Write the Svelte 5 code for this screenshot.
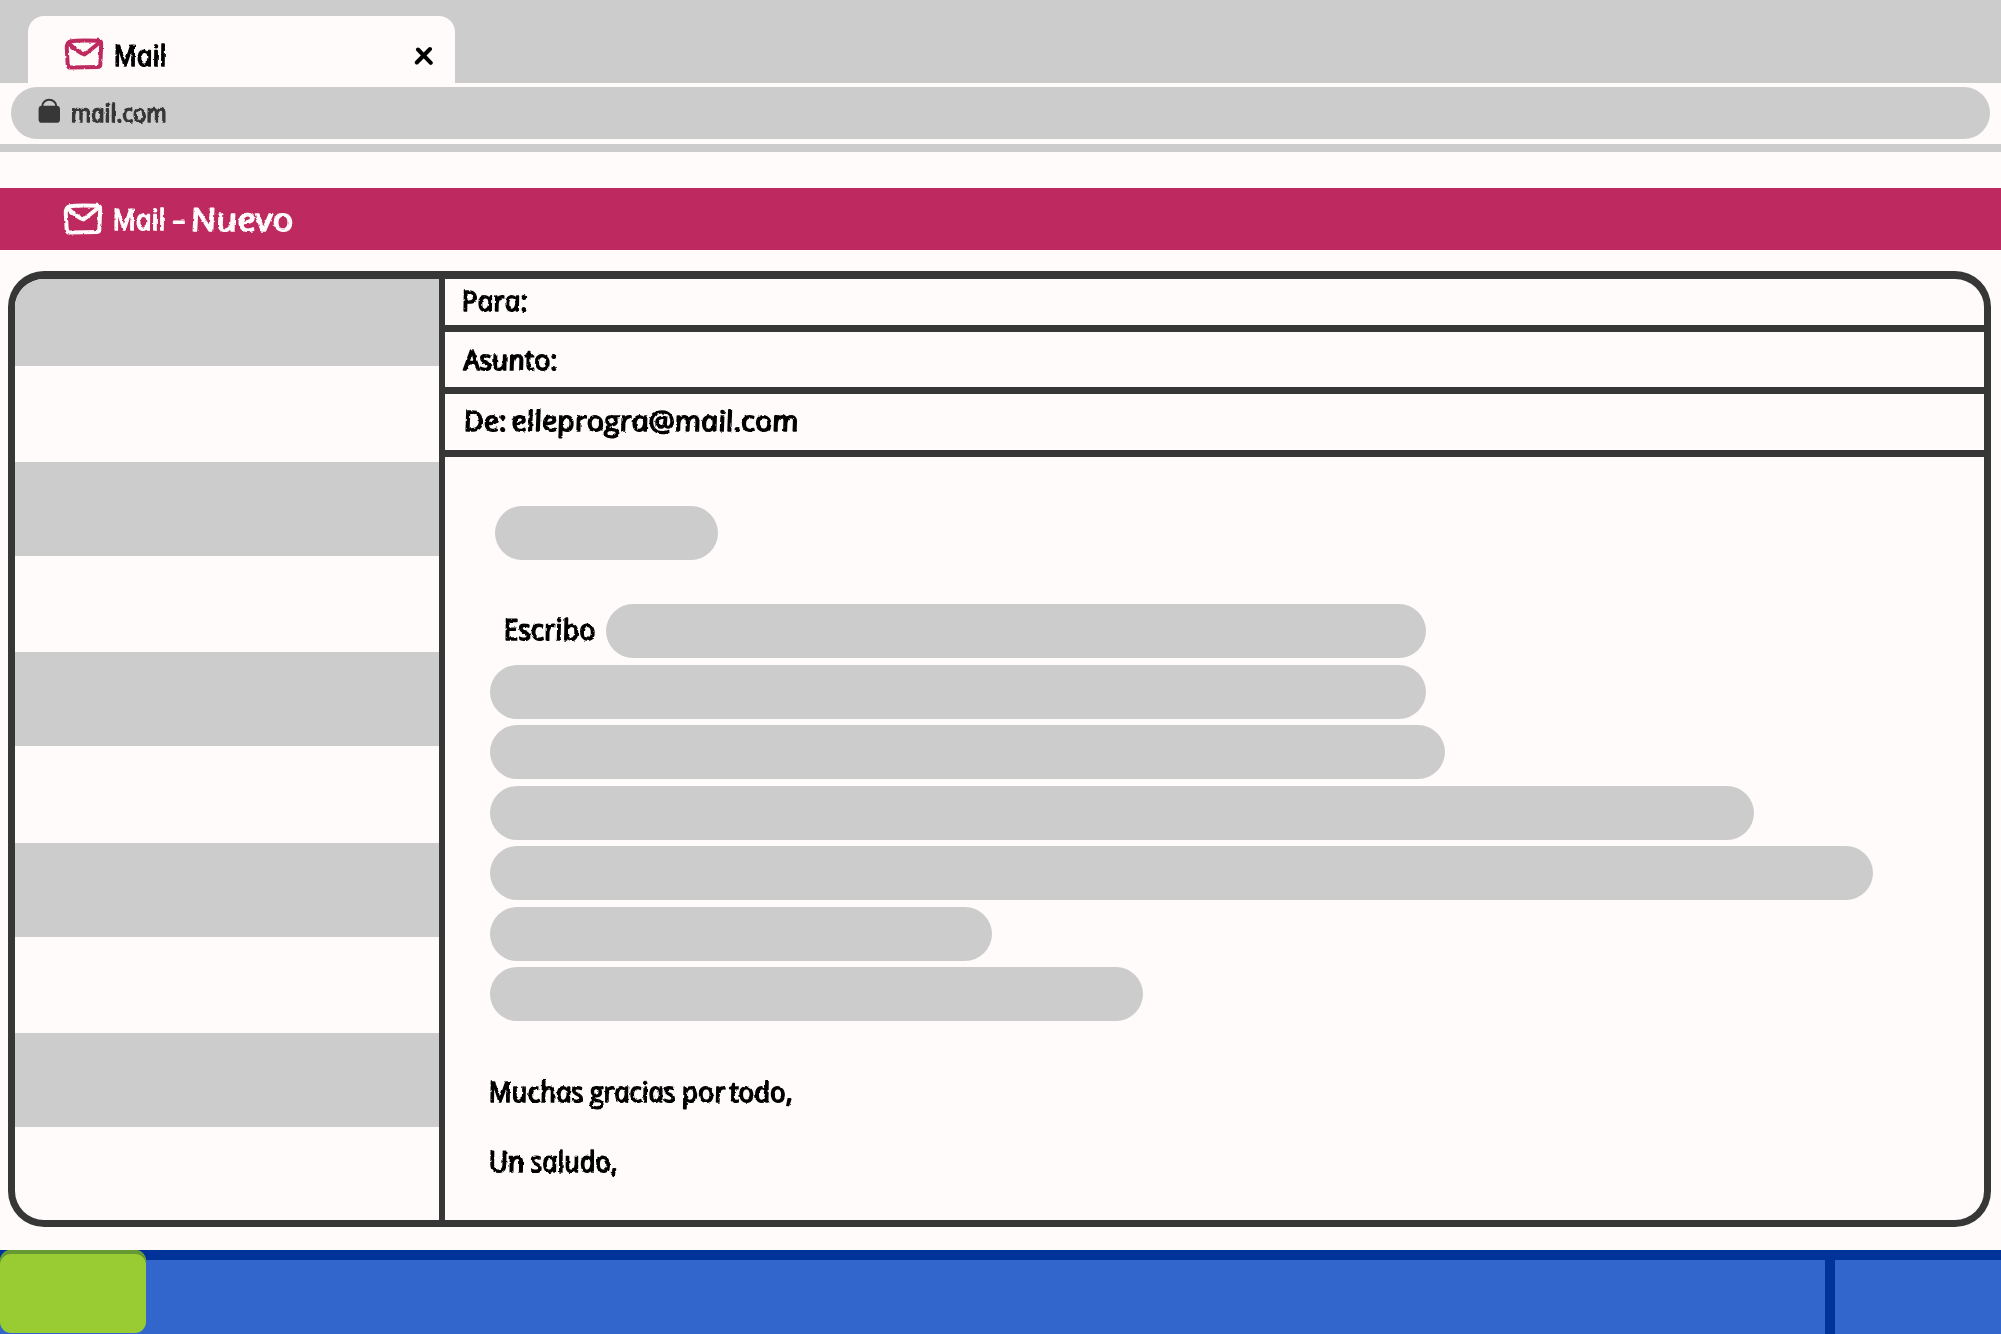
<script>
  // Each word is [text, x offset, width]; size is the font size of the line.
  const labels = {
    tab: { size: 29, words: [['Mail', 0, 53]] },
    url: { size: 25, words: [['mail.com', 0, 96]] },
    title: { size: 29, words: [['Mail', 0, 53], ['-', 60, 13]] },
    titleNew: { size: 32, words: [['Nuevo', 0, 103]] },
    to: { size: 28, words: [['Para:', 0, 66]] },
    subject: { size: 28, words: [['Asunto:', 0, 94]] },
    from: { size: 28, words: [['De:', 0, 43], ['elleprogra@mail.com', 48, 287]] },
    write: { size: 29, words: [['Escribo', 0, 92]] },
    thanks: {
      size: 28,
      words: [['Muchas', 0, 95], ['gracias', 101, 86], ['por', 193, 44], ['todo,', 241, 63]]
    },
    regards: { size: 29, words: [['Un', 0, 36], ['saludo,', 42, 87]] }
  };

  const lines = [936, 955, 1264, 1383, 502, 653];
  const stripes = [0, 1, 2, 3, 4];
</script>

{#snippet hand(label)}
  <svg class="hand" height="40" width={label.words.at(-1)[1] + label.words.at(-1)[2]}>
    <text transform="translate(0 30) skewX(11)" font-size={label.size}>
      {#each label.words as [word, x, w]}<tspan {x} y="0" textLength={w} lengthAdjust="spacingAndGlyphs">{word}</tspan>{' '}{/each}
    </text>
  </svg>
{/snippet}

{#snippet envelope()}
  <svg class="envelope" width="40" height="32" viewBox="0 0 40 32">
    <path d="M7 3.2C14 2 27 2.4 35 2.8Q37.3 3 37.2 6L36.3 27Q36.1 29 33.5 29L7 29.6Q4 29.8 3.7 26.5L2.8 11Q2.5 4 7 3.2Z" />
    <path d="M5 5.5Q13 13.5 20.5 16.5Q26 12.5 35.5 4.5" />
  </svg>
{/snippet}

<svg class="defs" width="0" height="0" aria-hidden="true">
  <filter id="rough" x="-5%" y="-10%" width="110%" height="120%">
    <feTurbulence type="fractalNoise" baseFrequency="0.22" numOctaves="2" seed="4" />
    <feDisplacementMap in="SourceGraphic" scale="2.6" xChannelSelector="R" yChannelSelector="G" />
  </filter>
</svg>

<div class="screen">
  <header class="tabs">
    <div class="tab">
      {@render envelope()}
      {@render hand(labels.tab)}
      <svg class="close" width="20" height="20" viewBox="0 0 20 20">
        <path d="M4 3.5L16.8 16.8M16 3L2.8 16.5" />
      </svg>
    </div>
  </header>

  <div class="address">
    <svg class="lock" width="23" height="26" viewBox="0 0 23 26">
      <path d="M4.2 10V8.5C4.2 4.5 7.2 1.8 11.2 1.8S18.4 4.5 18.4 8.5V10" />
      <rect x=".6" y="7.8" width="21.4" height="17" rx="3.4" />
    </svg>
    {@render hand(labels.url)}
  </div>
  <div class="rule"></div>

  <div class="title">
    {@render envelope()}
    {@render hand(labels.title)}
    {@render hand(labels.titleNew)}
  </div>

  <main class="card">
    <aside>
      {#each stripes as s (s)}<div class="stripe"></div>{/each}
    </aside>
    <section>
      <div class="field to">{@render hand(labels.to)}</div>
      <div class="field subject">{@render hand(labels.subject)}</div>
      <div class="field from">{@render hand(labels.from)}</div>
      <div class="message">
        <div class="pill greeting"></div>
        <div class="opening">
          {@render hand(labels.write)}
          <div class="pill"></div>
        </div>
        <div class="lines">
          {#each lines as w}<div class="pill" style:width="{w}px"></div>{/each}
        </div>
        <div class="thanks">{@render hand(labels.thanks)}</div>
        <div class="regards">{@render hand(labels.regards)}</div>
      </div>
    </section>
  </main>

  <footer>
    <div class="start"></div>
    <div class="tasks"></div>
    <div class="tray"></div>
  </footer>
</div>

<style>
  :global(body) {
    margin: 0;
    background: #fffbfa;
  }
  .defs {
    display: block;
  }
  .screen {
    box-sizing: border-box;
    width: 2001px;
    height: 1334px;
    overflow: hidden;
    display: flex;
    flex-direction: column;
    background: #fffbfa;
    color: #000;
  }
  .screen * {
    box-sizing: border-box;
  }
  svg {
    display: block;
    flex: none;
  }
  .hand {
    overflow: visible;
    filter: url(#rough);
  }
  .hand text {
    font-family: 'Open Sans', 'Noto Sans', sans-serif;
    font-style: italic;
    font-weight: 500;
    fill: currentColor;
    stroke: currentColor;
    stroke-width: 1.5px;
    stroke-linejoin: round;
  }
  .envelope {
    filter: url(#rough);
  }
  .envelope path,
  .close path {
    fill: none;
    stroke: currentColor;
    stroke-width: 4;
    stroke-linecap: round;
    stroke-linejoin: round;
  }

  .tabs {
    flex: none;
    height: 83px;
    padding: 16px 0 0 28px;
    background: #ccc;
  }
  .tab {
    width: 427px;
    height: 67px;
    padding: 0 21px 0 36px;
    display: flex;
    align-items: flex-start;
    border-radius: 16px 16px 0 0;
    background: #fffbfa;
  }
  .tab .envelope {
    margin-top: 22px;
    color: #be295f;
  }
  .tab .hand {
    margin: 20px 0 0 11px;
  }
  .close {
    margin: 30px 0 0 auto;
  }

  .address {
    flex: none;
    height: 52px;
    margin: 4px 11px 0;
    padding-left: 27px;
    display: flex;
    align-items: flex-start;
    border-radius: 26px;
    background: #ccc;
    color: #373737;
  }
  .lock {
    margin-top: 11px;
  }
  .lock path {
    fill: none;
    stroke: #373737;
    stroke-width: 2;
  }
  .lock rect {
    fill: #373737;
  }
  .address .hand {
    margin: 5px 0 0 11px;
  }
  .rule {
    flex: none;
    height: 8px;
    margin-top: 5px;
    background: #ccc;
  }

  .title {
    flex: none;
    height: 62px;
    margin-top: 36px;
    padding-left: 63px;
    display: flex;
    align-items: flex-start;
    background: #be295f;
    color: #fffbfa;
  }
  .title .envelope {
    margin-top: 15px;
  }
  .title .hand {
    margin: 12px 0 0 11px;
  }
  .title .hand:last-child {
    margin: 13px 0 0 5px;
  }

  .card {
    flex: none;
    height: 956px;
    margin: 21px 10px 0 8px;
    display: flex;
    overflow: hidden;
    border: 7px solid #373737;
    border-top-width: 8px;
    border-radius: 36px;
  }
  aside {
    width: 430px;
    flex: none;
    overflow: hidden;
    border-right: 6px solid #373737;
  }
  .stripe {
    height: 94px;
    margin-bottom: 96.2px;
    background: #ccc;
  }
  .stripe:first-child {
    height: 87px;
  }
  section {
    flex: 1;
  }
  .field {
    border-bottom: 7px solid #373737;
  }
  .to {
    height: 53px;
    padding: 2px 0 0 18px;
  }
  .subject {
    height: 62px;
    padding: 8px 0 0 20px;
  }
  .from {
    height: 63px;
    padding: 7px 0 0 20px;
  }
  .message {
    padding: 49px 0 0 45px;
    display: flex;
    flex-direction: column;
  }
  .pill {
    height: 54px;
    border-radius: 27px;
    background: #ccc;
  }
  .greeting {
    width: 223px;
    margin-left: 5px;
  }
  .opening {
    display: flex;
    margin: 44px 0 6.5px 15px;
    gap: 9px;
  }
  .opening .hand {
    margin-top: 6px;
  }
  .opening .pill {
    width: 820px;
  }
  .lines {
    display: flex;
    flex-direction: column;
    gap: 6.5px;
  }
  .thanks {
    margin-top: 51px;
  }
  .regards {
    margin-top: 30px;
  }

  footer {
    flex: none;
    height: 84px;
    margin-top: 23px;
    display: flex;
    background: linear-gradient(#003399 10px, #3366cc 10px);
  }
  .start {
    width: 146px;
    height: 83px;
    border-radius: 11px;
    background: #99cc33;
    box-shadow: inset 0 4px #669933;
  }
  .tasks {
    flex: 1;
  }
  .tray {
    width: 176px;
    border-left: 10px solid #003399;
  }
</style>
